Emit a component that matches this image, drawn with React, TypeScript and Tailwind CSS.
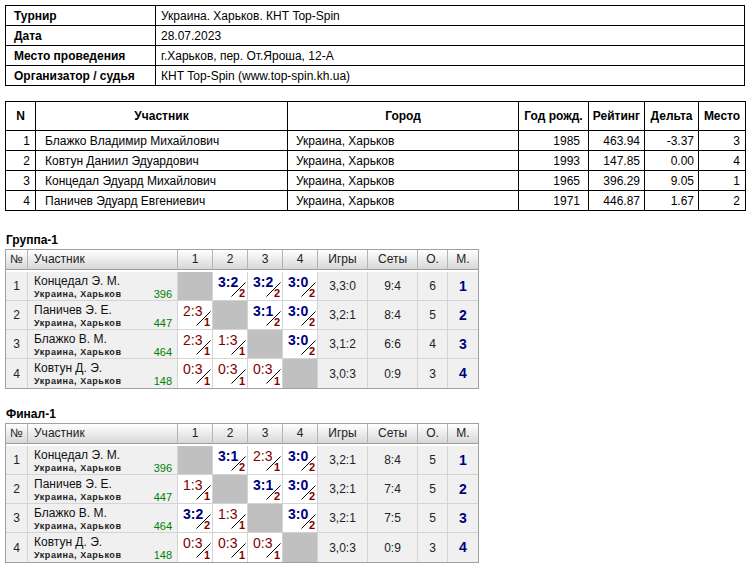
import React from 'react'

type Res = { s: string; win: boolean; p: number } | null

type Row = {
  n: number
  name: string
  rating: number
  res: Res[]
  games: string
  sets: string
  pts: number
  place: number
}

const W = (s: string): Res => ({ s, win: true, p: 2 })
const L = (s: string): Res => ({ s, win: false, p: 1 })

const info = [
  ['Турнир', 'Украина. Харьков. КНТ Top-Spin'],
  ['Дата', '28.07.2023'],
  ['Место проведения', 'г.Харьков, пер. От.Яроша, 12-А'],
  ['Организатор / судья', 'КНТ Top-Spin (www.top-spin.kh.ua)'],
]

const players = [
  { n: 1, name: 'Блажко Владимир Михайлович', city: 'Украина, Харьков', year: 1985, rating: '463.94', delta: '-3.37', place: 3 },
  { n: 2, name: 'Ковтун Даниил Эдуардович', city: 'Украина, Харьков', year: 1993, rating: '147.85', delta: '0.00', place: 4 },
  { n: 3, name: 'Концедал Эдуард Михайлович', city: 'Украина, Харьков', year: 1965, rating: '396.29', delta: '9.05', place: 1 },
  { n: 4, name: 'Паничев Эдуард Евгениевич', city: 'Украина, Харьков', year: 1971, rating: '446.87', delta: '1.67', place: 2 },
]

const group1: Row[] = [
  { n: 1, name: 'Концедал Э. М.', rating: 396, res: [null, W('3:2'), W('3:2'), W('3:0')], games: '3,3:0', sets: '9:4', pts: 6, place: 1 },
  { n: 2, name: 'Паничев Э. Е.', rating: 447, res: [L('2:3'), null, W('3:1'), W('3:0')], games: '3,2:1', sets: '8:4', pts: 5, place: 2 },
  { n: 3, name: 'Блажко В. М.', rating: 464, res: [L('2:3'), L('1:3'), null, W('3:0')], games: '3,1:2', sets: '6:6', pts: 4, place: 3 },
  { n: 4, name: 'Ковтун Д. Э.', rating: 148, res: [L('0:3'), L('0:3'), L('0:3'), null], games: '3,0:3', sets: '0:9', pts: 3, place: 4 },
]

const final1: Row[] = [
  { n: 1, name: 'Концедал Э. М.', rating: 396, res: [null, W('3:1'), L('2:3'), W('3:0')], games: '3,2:1', sets: '8:4', pts: 5, place: 1 },
  { n: 2, name: 'Паничев Э. Е.', rating: 447, res: [L('1:3'), null, W('3:1'), W('3:0')], games: '3,2:1', sets: '7:4', pts: 5, place: 2 },
  { n: 3, name: 'Блажко В. М.', rating: 464, res: [W('3:2'), L('1:3'), null, W('3:0')], games: '3,2:1', sets: '7:5', pts: 5, place: 3 },
  { n: 4, name: 'Ковтун Д. Э.', rating: 148, res: [L('0:3'), L('0:3'), L('0:3'), null], games: '3,0:3', sets: '0:9', pts: 3, place: 4 },
]

function ScoreCell({ r, last }: { r: Res; last: boolean }) {
  const b = last ? 'border-r border-[#d4d4d4]' : 'border-r border-b border-[#d4d4d4]'
  if (!r) return <div className={`h-[29px] bg-[#c0c0c0] ${b}`} />
  return (
    <div className={`relative h-[29px] bg-white ${b}`}>
      <div
        className={`pl-[5px] pt-[2px] text-[14px] leading-[16px] ${
          r.win ? 'font-bold text-[#000080]' : 'text-[#800000]'
        }`}
      >
        {r.s}
      </div>
      <svg className="absolute left-[18px] top-[10px]" width="15" height="15" viewBox="0 0 15 15">
        <line x1="0.5" y1="14.5" x2="14.5" y2="0.5" stroke="#000" strokeWidth="1" />
      </svg>
      <span className="absolute right-[2px] bottom-[1px] text-[11px] leading-[11px] font-bold text-[#800000]">
        {r.p}
      </span>
    </div>
  )
}

function GroupTable({ title, rows }: { title: string; rows: Row[] }) {
  const head = ['№', 'Участник', '1', '2', '3', '4', 'Игры', 'Сеты', 'О.', 'М.']
  return (
    <div>
      <div className="h-[15px] leading-[15px] text-[12px] font-bold text-black pl-[1px] mb-[1px]">{title}</div>
      <div className="w-[474px] border border-[#a0a0a0]">
        <div className="grid grid-cols-[22px_150px_35px_35px_35px_35px_50px_50px_30px_30px]">
          {head.map((h, i) => (
            <div
              key={h}
              className={`h-[20px] leading-[19px] text-[12px] text-[#222] bg-gradient-to-b from-white to-[#d8d8d8] border-b border-[#9c9c9c] ${
                i < 9 ? 'border-r border-r-[#b4b4b4]' : ''
              } ${i === 1 ? 'text-left pl-[6px]' : 'text-center'}`}
            >
              {h}
            </div>
          ))}
          <div className="col-span-10 h-[2px] bg-white" />
          {rows.map((r, ri) => {
            const last = ri === rows.length - 1
            const cell = `h-[29px] bg-[#f0f0f0] border-r border-[#d4d4d4] ${last ? '' : 'border-b'}`
            return (
              <React.Fragment key={r.n}>
                <div className={`${cell} flex items-center justify-center text-[12px] text-[#222]`}>{r.n}</div>
                <div className={`${cell} flex flex-col pl-[6px] pr-[5px]`}>
                  <div className="text-[12px] leading-[14px] pt-[2px] text-[#111]">{r.name}</div>
                  <div className="flex items-end justify-between mt-[1px]">
                    <span className="text-[9px] leading-[11px] font-bold tracking-[0.55px] text-[#222]">
                      Украина, Харьков
                    </span>
                    <span className="text-[11px] leading-[11px] text-[#008000]">{r.rating}</span>
                  </div>
                </div>
                {r.res.map((x, i) => (
                  <ScoreCell key={i} r={x} last={last} />
                ))}
                <div className={`${cell} flex items-center justify-center text-[12px] text-[#222]`}>{r.games}</div>
                <div className={`${cell} flex items-center justify-center text-[12px] text-[#222]`}>{r.sets}</div>
                <div className={`${cell} flex items-center justify-center text-[12px] text-[#222]`}>{r.pts}</div>
                <div
                  className={`h-[29px] bg-[#f0f0f0] border-[#d4d4d4] ${
                    last ? '' : 'border-b'
                  } flex items-center justify-center text-[14px] font-bold text-[#000080]`}
                >
                  {r.place}
                </div>
              </React.Fragment>
            )
          })}
        </div>
      </div>
    </div>
  )
}

export default function App() {
  return (
    <div className="min-h-[568px] w-[750px] bg-white p-[5px] font-['Liberation_Sans',Arial,sans-serif] text-black">
      {/* Tournament info */}
      <table className="w-[740px] table-fixed border-collapse border border-black text-[12px]">
        <colgroup>
          <col className="w-[150px]" />
          <col />
        </colgroup>
        <tbody>
          {info.map(([k, v]) => (
            <tr key={k} className="h-[20px]">
              <td className="border border-black pl-[8px] font-bold leading-[14px]">{k}</td>
              <td className="border border-black pl-[5px] leading-[14px]">{v}</td>
            </tr>
          ))}
        </tbody>
      </table>

      {/* Participants */}
      <table className="mt-[15px] w-[740px] table-fixed border-collapse border border-black text-[12px]">
        <colgroup>
          <col className="w-[30px]" />
          <col className="w-[252px]" />
          <col className="w-[231px]" />
          <col className="w-[70px]" />
          <col className="w-[56px]" />
          <col className="w-[54px]" />
          <col className="w-[47px]" />
        </colgroup>
        <thead>
          <tr className="h-[29px] font-bold">
            <th className="border border-black">N</th>
            <th className="border border-black">Участник</th>
            <th className="border border-black">Город</th>
            <th className="border border-black whitespace-nowrap">Год рожд.</th>
            <th className="border border-black">Рейтинг</th>
            <th className="border border-black">Дельта</th>
            <th className="border border-black">Место</th>
          </tr>
        </thead>
        <tbody>
          {players.map((p) => (
            <tr key={p.n} className="h-[20px] leading-[14px]">
              <td className="border border-black text-right pr-[5px]">{p.n}</td>
              <td className="border border-black pl-[9px]">{p.name}</td>
              <td className="border border-black pl-[8px]">{p.city}</td>
              <td className="border border-black text-right pr-[8px]">{p.year}</td>
              <td className="border border-black text-right pr-[4px]">{p.rating}</td>
              <td className="border border-black text-right pr-[4px]">{p.delta}</td>
              <td className="border border-black text-right pr-[5px]">{p.place}</td>
            </tr>
          ))}
        </tbody>
      </table>

      <div className="mt-[22px]">
        <GroupTable title="Группа-1" rows={group1} />
      </div>
      <div className="mt-[18px]">
        <GroupTable title="Финал-1" rows={final1} />
      </div>
    </div>
  )
}
